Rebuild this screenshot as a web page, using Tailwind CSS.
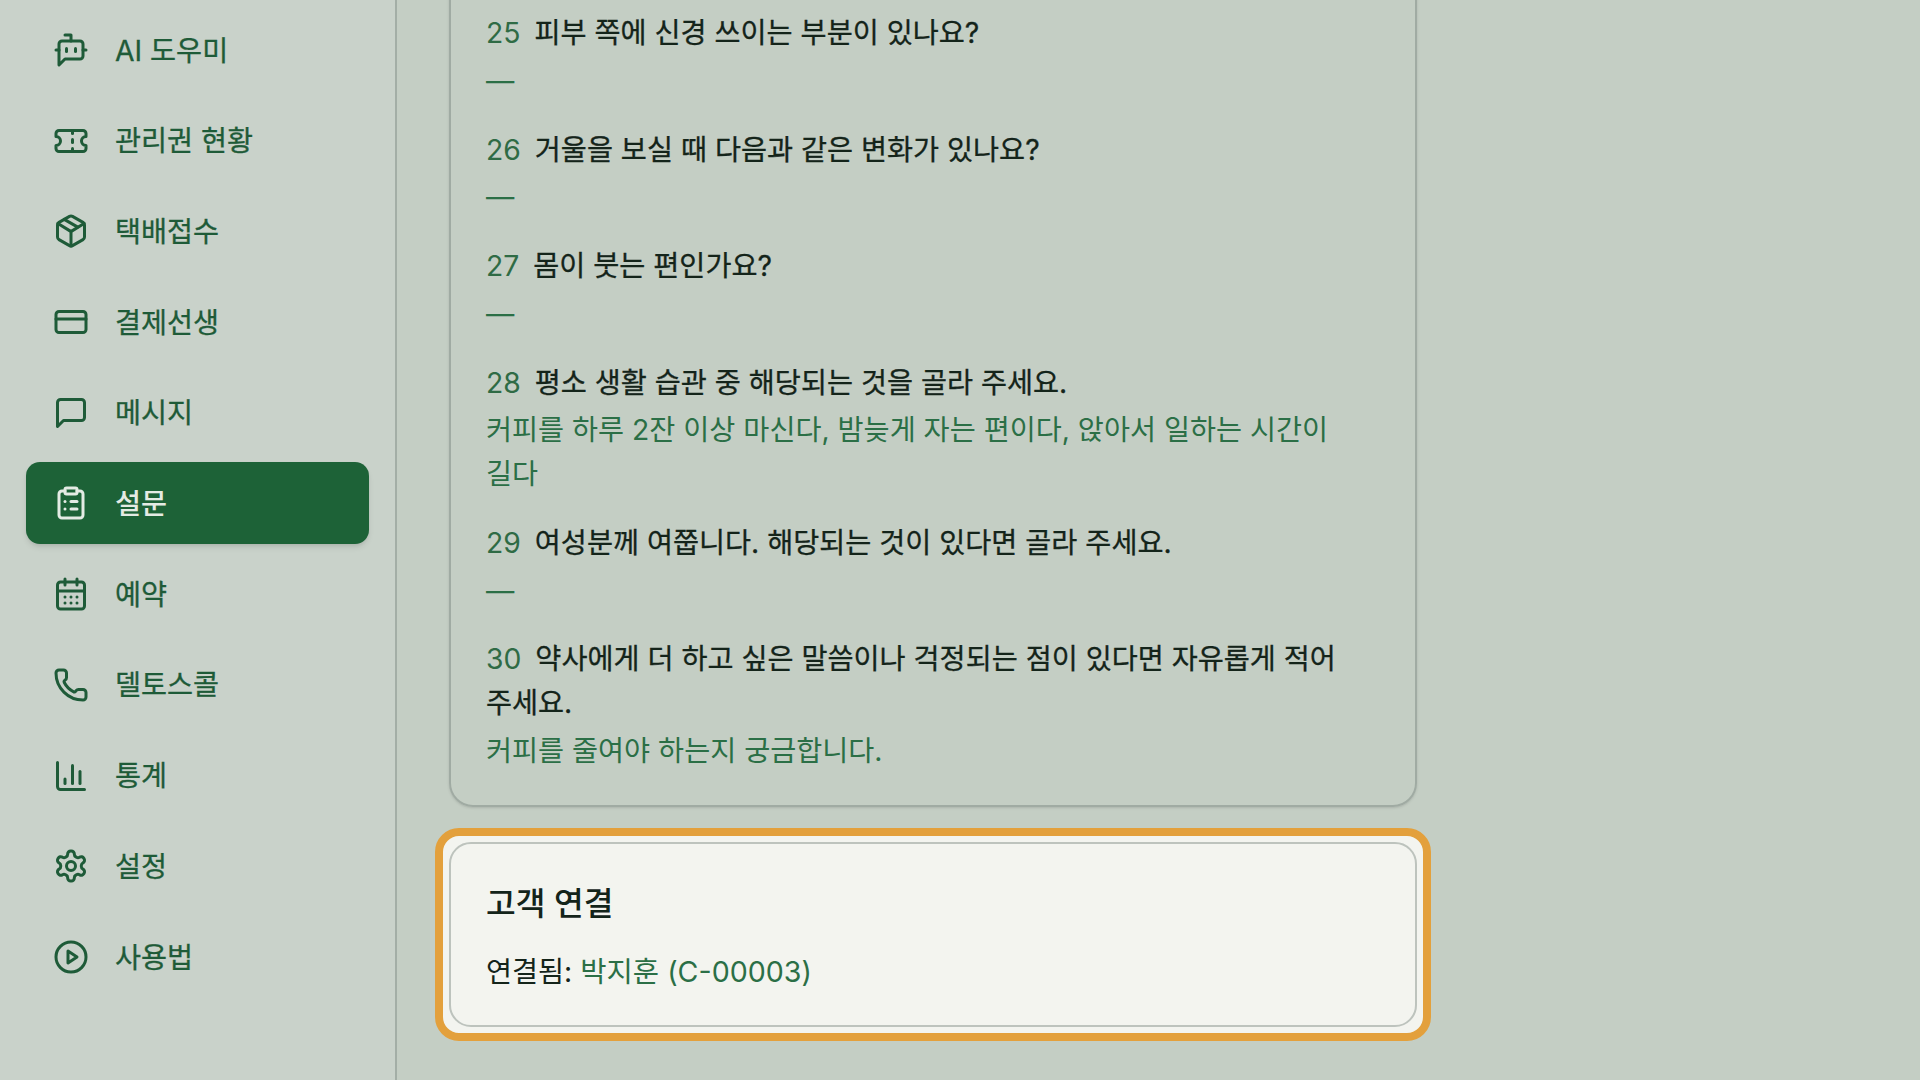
<!DOCTYPE html>
<html lang="ko">
  <head>
    <meta charset="UTF-8" />
    <title>설문</title>
    <script src="https://cdn.jsdelivr.net/npm/@tailwindcss/browser@4"></script>
  </head>
  <body class="h-screen overflow-hidden bg-[#c4cec4] font-[Inter,'Noto_Sans_CJK_KR',sans-serif] text-[28.3px] leading-[43.75px]">
    <div class="flex h-full">
      <!-- Sidebar -->
      <aside class="w-[397px] shrink-0 border-r-2 border-[#a3aea6] bg-[#c9d2ca] pl-[26px] pr-[26px] pt-[9px] text-[#1e5b38] [-webkit-text-stroke:0.3px_currentColor]">
        <nav class="flex flex-col gap-[8.7px]">
          <a class="flex h-[82px] items-center gap-[26px] rounded-[14px] pl-[27px]">
            <svg class="h-[36px] w-[36px] shrink-0" viewBox="0 0 24 24" fill="none" stroke="currentColor" stroke-width="2" stroke-linecap="round" stroke-linejoin="round"><path d="M12 6V2H8"/><path d="m8 18-4 4V8a2 2 0 0 1 2-2h12a2 2 0 0 1 2 2v8a2 2 0 0 1-2 2Z"/><path d="M2 12h2"/><path d="M9 11v2"/><path d="M15 11v2"/><path d="M20 12h2"/></svg>
            <span class="pt-[3px]">AI 도우미</span>
          </a>
          <a class="flex h-[82px] items-center gap-[26px] rounded-[14px] pl-[27px]">
            <svg class="h-[36px] w-[36px] shrink-0" viewBox="0 0 24 24" fill="none" stroke="currentColor" stroke-width="2" stroke-linecap="round" stroke-linejoin="round"><path d="M2 9a3 3 0 0 1 0 6v2a2 2 0 0 0 2 2h16a2 2 0 0 0 2-2v-2a3 3 0 0 1 0-6V7a2 2 0 0 0-2-2H4a2 2 0 0 0-2 2Z"/><path d="M13 5v2"/><path d="M13 17v2"/><path d="M13 11v2"/></svg>
            <span class="pt-[3px]">관리권 현황</span>
          </a>
          <a class="flex h-[82px] items-center gap-[26px] rounded-[14px] pl-[27px]">
            <svg class="h-[36px] w-[36px] shrink-0" viewBox="0 0 24 24" fill="none" stroke="currentColor" stroke-width="2" stroke-linecap="round" stroke-linejoin="round"><path d="M11 21.73a2 2 0 0 0 2 0l7-4A2 2 0 0 0 21 16V8a2 2 0 0 0-1-1.73l-7-4a2 2 0 0 0-2 0l-7 4A2 2 0 0 0 3 8v8a2 2 0 0 0 1 1.73z"/><path d="M12 22V12"/><path d="m3.3 7 7.703 4.734a2 2 0 0 0 1.994 0L20.7 7"/><path d="m7.5 4.27 9 5.15"/></svg>
            <span class="pt-[3px]">택배접수</span>
          </a>
          <a class="flex h-[82px] items-center gap-[26px] rounded-[14px] pl-[27px]">
            <svg class="h-[36px] w-[36px] shrink-0" viewBox="0 0 24 24" fill="none" stroke="currentColor" stroke-width="2" stroke-linecap="round" stroke-linejoin="round"><rect width="20" height="14" x="2" y="5" rx="2"/><line x1="2" x2="22" y1="10" y2="10"/></svg>
            <span class="pt-[3px]">결제선생</span>
          </a>
          <a class="flex h-[82px] items-center gap-[26px] rounded-[14px] pl-[27px]">
            <svg class="h-[36px] w-[36px] shrink-0" viewBox="0 0 24 24" fill="none" stroke="currentColor" stroke-width="2" stroke-linecap="round" stroke-linejoin="round"><path d="M21 15a2 2 0 0 1-2 2H7l-4 4V5a2 2 0 0 1 2-2h14a2 2 0 0 1 2 2z"/></svg>
            <span class="pt-[3px]">메시지</span>
          </a>
          <a class="flex h-[82px] items-center gap-[26px] rounded-[14px] bg-[#1d6237] pl-[27px] font-medium text-[#e4ebe4] shadow-md [-webkit-text-stroke:0]">
            <svg class="h-[36px] w-[36px] shrink-0" viewBox="0 0 24 24" fill="none" stroke="currentColor" stroke-width="2" stroke-linecap="round" stroke-linejoin="round"><rect width="8" height="4" x="8" y="2" rx="1"/><path d="M16 4h2a2 2 0 0 1 2 2v14a2 2 0 0 1-2 2H6a2 2 0 0 1-2-2V6a2 2 0 0 1 2-2h2"/><path d="M12 11h4"/><path d="M12 16h4"/><path d="M8 11h.01"/><path d="M8 16h.01"/></svg>
            <span class="pt-[3px]">설문</span>
          </a>
          <a class="flex h-[82px] items-center gap-[26px] rounded-[14px] pl-[27px]">
            <svg class="h-[36px] w-[36px] shrink-0" viewBox="0 0 24 24" fill="none" stroke="currentColor" stroke-width="2" stroke-linecap="round" stroke-linejoin="round"><path d="M8 2v4"/><path d="M16 2v4"/><rect width="18" height="18" x="3" y="4" rx="2"/><path d="M3 10h18"/><path d="M8 14h.01"/><path d="M12 14h.01"/><path d="M16 14h.01"/><path d="M8 18h.01"/><path d="M12 18h.01"/><path d="M16 18h.01"/></svg>
            <span class="pt-[3px]">예약</span>
          </a>
          <a class="flex h-[82px] items-center gap-[26px] rounded-[14px] pl-[27px]">
            <svg class="h-[36px] w-[36px] shrink-0" viewBox="0 0 24 24" fill="none" stroke="currentColor" stroke-width="2" stroke-linecap="round" stroke-linejoin="round"><path d="M13.832 16.568a1 1 0 0 0 1.213-.303l.355-.465A2 2 0 0 1 17 15h3a2 2 0 0 1 2 2v3a2 2 0 0 1-2 2A18 18 0 0 1 2 4a2 2 0 0 1 2-2h3a2 2 0 0 1 2 2v3a2 2 0 0 1-.8 1.6l-.468.351a1 1 0 0 0-.292 1.233 14 14 0 0 0 6.392 6.384"/></svg>
            <span class="pt-[3px]">델토스콜</span>
          </a>
          <a class="flex h-[82px] items-center gap-[26px] rounded-[14px] pl-[27px]">
            <svg class="h-[36px] w-[36px] shrink-0" viewBox="0 0 24 24" fill="none" stroke="currentColor" stroke-width="2" stroke-linecap="round" stroke-linejoin="round"><path d="M3 3v16a2 2 0 0 0 2 2h16"/><path d="M18 17V9"/><path d="M13 17V5"/><path d="M8 17v-3"/></svg>
            <span class="pt-[3px]">통계</span>
          </a>
          <a class="flex h-[82px] items-center gap-[26px] rounded-[14px] pl-[27px]">
            <svg class="h-[36px] w-[36px] shrink-0" viewBox="0 0 24 24" fill="none" stroke="currentColor" stroke-width="2" stroke-linecap="round" stroke-linejoin="round"><path d="M12.22 2h-.44a2 2 0 0 0-2 2v.18a2 2 0 0 1-1 1.73l-.43.25a2 2 0 0 1-2 0l-.15-.08a2 2 0 0 0-2.73.73l-.22.38a2 2 0 0 0 .73 2.73l.15.1a2 2 0 0 1 1 1.72v.51a2 2 0 0 1-1 1.74l-.15.09a2 2 0 0 0-.73 2.73l.22.38a2 2 0 0 0 2.73.73l.15-.08a2 2 0 0 1 2 0l.43.25a2 2 0 0 1 1 1.73V20a2 2 0 0 0 2 2h.44a2 2 0 0 0 2-2v-.18a2 2 0 0 1 1-1.73l.43-.25a2 2 0 0 1 2 0l.15.08a2 2 0 0 0 2.73-.73l.22-.39a2 2 0 0 0-.73-2.73l-.15-.08a2 2 0 0 1-1-1.74v-.5a2 2 0 0 1 1-1.74l.15-.09a2 2 0 0 0 .73-2.73l-.22-.38a2 2 0 0 0-2.73-.73l-.15.08a2 2 0 0 1-2 0l-.43-.25a2 2 0 0 1-1-1.73V4a2 2 0 0 0-2-2z"/><circle cx="12" cy="12" r="3"/></svg>
            <span class="pt-[3px]">설정</span>
          </a>
          <a class="flex h-[82px] items-center gap-[26px] rounded-[14px] pl-[27px]">
            <svg class="h-[36px] w-[36px] shrink-0" viewBox="0 0 24 24" fill="none" stroke="currentColor" stroke-width="2" stroke-linecap="round" stroke-linejoin="round"><circle cx="12" cy="12" r="10"/><polygon points="10 8 16 12 10 16 10 8"/></svg>
            <span class="pt-[3px]">사용법</span>
          </a>
        </nav>
      </aside>

      <!-- Main Content -->
      <main class="flex-1 pl-[52px]">
        <div class="-mt-[40px] w-[968px] break-keep rounded-[24px] border-2 border-[#a0aba3] px-[35px] pt-[50px] pb-[31.5px] shadow-sm">
          <div class="flex flex-col gap-[25px]">
            <div>
              <p class="text-[#14241a] [-webkit-text-stroke:0.3px_currentColor]"><span class="mr-[14px] text-[#2f6b45] [-webkit-text-stroke:0]">25</span>피부 쪽에 신경 쓰이는 부분이 있나요?</p>
              <p class="mt-[4px] text-[#2b6f46]">—</p>
            </div>
            <div>
              <p class="text-[#14241a] [-webkit-text-stroke:0.3px_currentColor]"><span class="mr-[14px] text-[#2f6b45] [-webkit-text-stroke:0]">26</span>거울을 보실 때 다음과 같은 변화가 있나요?</p>
              <p class="mt-[4px] text-[#2b6f46]">—</p>
            </div>
            <div>
              <p class="text-[#14241a] [-webkit-text-stroke:0.3px_currentColor]"><span class="mr-[14px] text-[#2f6b45] [-webkit-text-stroke:0]">27</span>몸이 붓는 편인가요?</p>
              <p class="mt-[4px] text-[#2b6f46]">—</p>
            </div>
            <div>
              <p class="text-[#14241a] [-webkit-text-stroke:0.3px_currentColor]"><span class="mr-[14px] text-[#2f6b45] [-webkit-text-stroke:0]">28</span>평소 생활 습관 중 해당되는 것을 골라 주세요.</p>
              <p class="mt-[4px] text-[#2b6f46]">커피를 하루 2잔 이상 마신다, 밤늦게 자는 편이다, 앉아서 일하는 시간이 길다</p>
            </div>
            <div>
              <p class="text-[#14241a] [-webkit-text-stroke:0.3px_currentColor]"><span class="mr-[14px] text-[#2f6b45] [-webkit-text-stroke:0]">29</span>여성분께 여쭙니다. 해당되는 것이 있다면 골라 주세요.</p>
              <p class="mt-[4px] text-[#2b6f46]">—</p>
            </div>
            <div>
              <p class="text-[#14241a] [-webkit-text-stroke:0.3px_currentColor]"><span class="mr-[14px] text-[#2f6b45] [-webkit-text-stroke:0]">30</span>약사에게 더 하고 싶은 말씀이나 걱정되는 점이 있다면 자유롭게 적어 주세요.</p>
              <p class="mt-[4px] text-[#2b6f46]">커피를 줄여야 하는지 궁금합니다.</p>
            </div>
          </div>
        </div>

        <!-- 고객 연결 -->
        <div class="-ml-[14px] mt-[21px] w-[996px] rounded-[24px] border-[8px] border-[#e3a03c] bg-[#f3f4ef] p-[6px]">
          <div class="h-[185px] rounded-[22px] border-2 border-[#bdc3bd] px-[35px] pt-[38px]">
            <h2 class="text-[32.3px] font-medium leading-[44px] text-[#14241a]">고객 연결</h2>
            <p class="mt-[24px] text-[#14241a]">연결됨: <span class="text-[28.6px] text-[#2b6f46]">박지훈 (C-00003)</span></p>
          </div>
        </div>
      </main>
    </div>
  </body>
</html>
